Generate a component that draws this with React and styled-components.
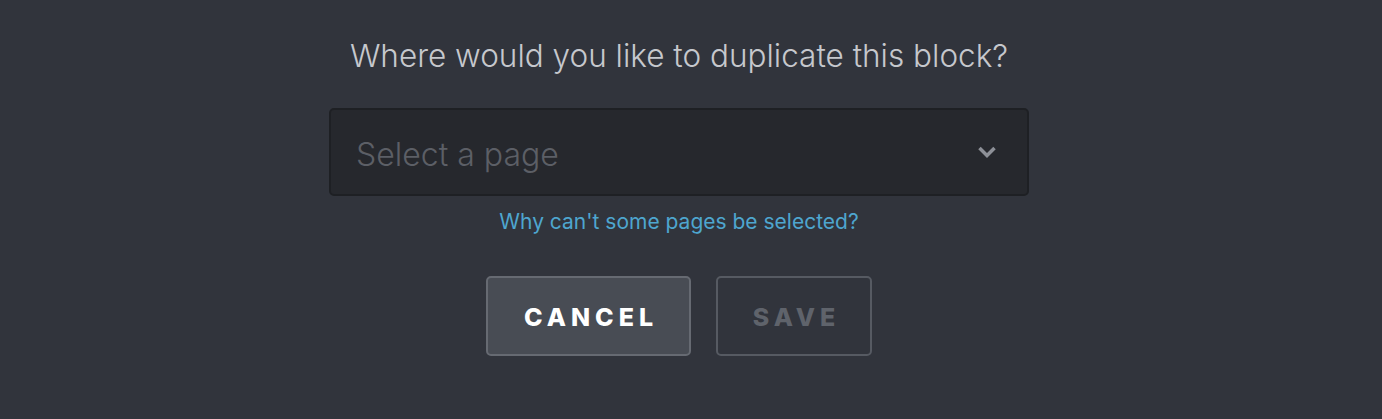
import React from "react";
import styled, { createGlobalStyle } from "styled-components";

const GlobalStyle = createGlobalStyle`
  html, body {
    margin: 0;
    padding: 0;
    background: #31343c;
  }
  body {
    font-family: "Inter", "Liberation Sans", sans-serif;
  }
`;

const Page = styled.div`
  display: flex;
  flex-direction: column;
  align-items: center;
  height: 419px;
  padding: 36px 24px 0 0;
  box-sizing: border-box;
`;

const Title = styled.h2`
  margin: 0;
  font-weight: 300;
  font-size: 31.5px;
  line-height: 40px;
  color: #c6c8cd;
`;

const Select = styled.div`
  margin-top: 32px;
  width: 700px;
  height: 88px;
  box-sizing: border-box;
  display: flex;
  align-items: center;
  justify-content: space-between;
  padding: 4px 30px 0 25px;
  background: #26282d;
  border: 2px solid #1e2024;
  border-radius: 5px;
`;

const Placeholder = styled.span`
  font-weight: 300;
  font-size: 32px;
  color: #5c5f66;
`;

const Help = styled.a`
  margin-top: 12px;
  font-size: 21px;
  line-height: 28px;
  color: #4ea6cf;
  text-decoration: none;
`;

const Actions = styled.div`
  display: flex;
  gap: 25px;
  margin-top: 40px;
`;

const Button = styled.button`
  height: 80px;
  width: ${(p) => p.$width}px;
  box-sizing: border-box;
  border-radius: 5px;
  border: 2px solid ${(p) => (p.$primary ? "#666a72" : "#565a62")};
  background: ${(p) => (p.$primary ? "#484c54" : "transparent")};
  color: ${(p) => (p.$primary ? "#ffffff" : "#5f636b")};
  font-family: "Inter", "Liberation Sans", sans-serif;
  font-weight: 800;
  font-size: 25px;
  letter-spacing: 5px;
  padding: 2px 0 0 5px;
  cursor: pointer;
`;

const Chevron = () => (
  <svg width="20" height="14" viewBox="0 0 20 14" style={{ marginTop: -4 }}>
    <path d="M2.5 3 L10 10.5 L17.5 3" fill="none" stroke="#8d9097" strokeWidth="3.5" />
  </svg>
);

export default function App() {
  return (
    <>
      <GlobalStyle />
      <Page>
        <Title>Where would you like to duplicate this block?</Title>
        <Select>
          <Placeholder>Select a page</Placeholder>
          <Chevron />
        </Select>
        <Help href="#">Why can't some pages be selected?</Help>
        <Actions>
          <Button $primary $width={205}>CANCEL</Button>
          <Button $width={156}>SAVE</Button>
        </Actions>
      </Page>
    </>
  );
}
